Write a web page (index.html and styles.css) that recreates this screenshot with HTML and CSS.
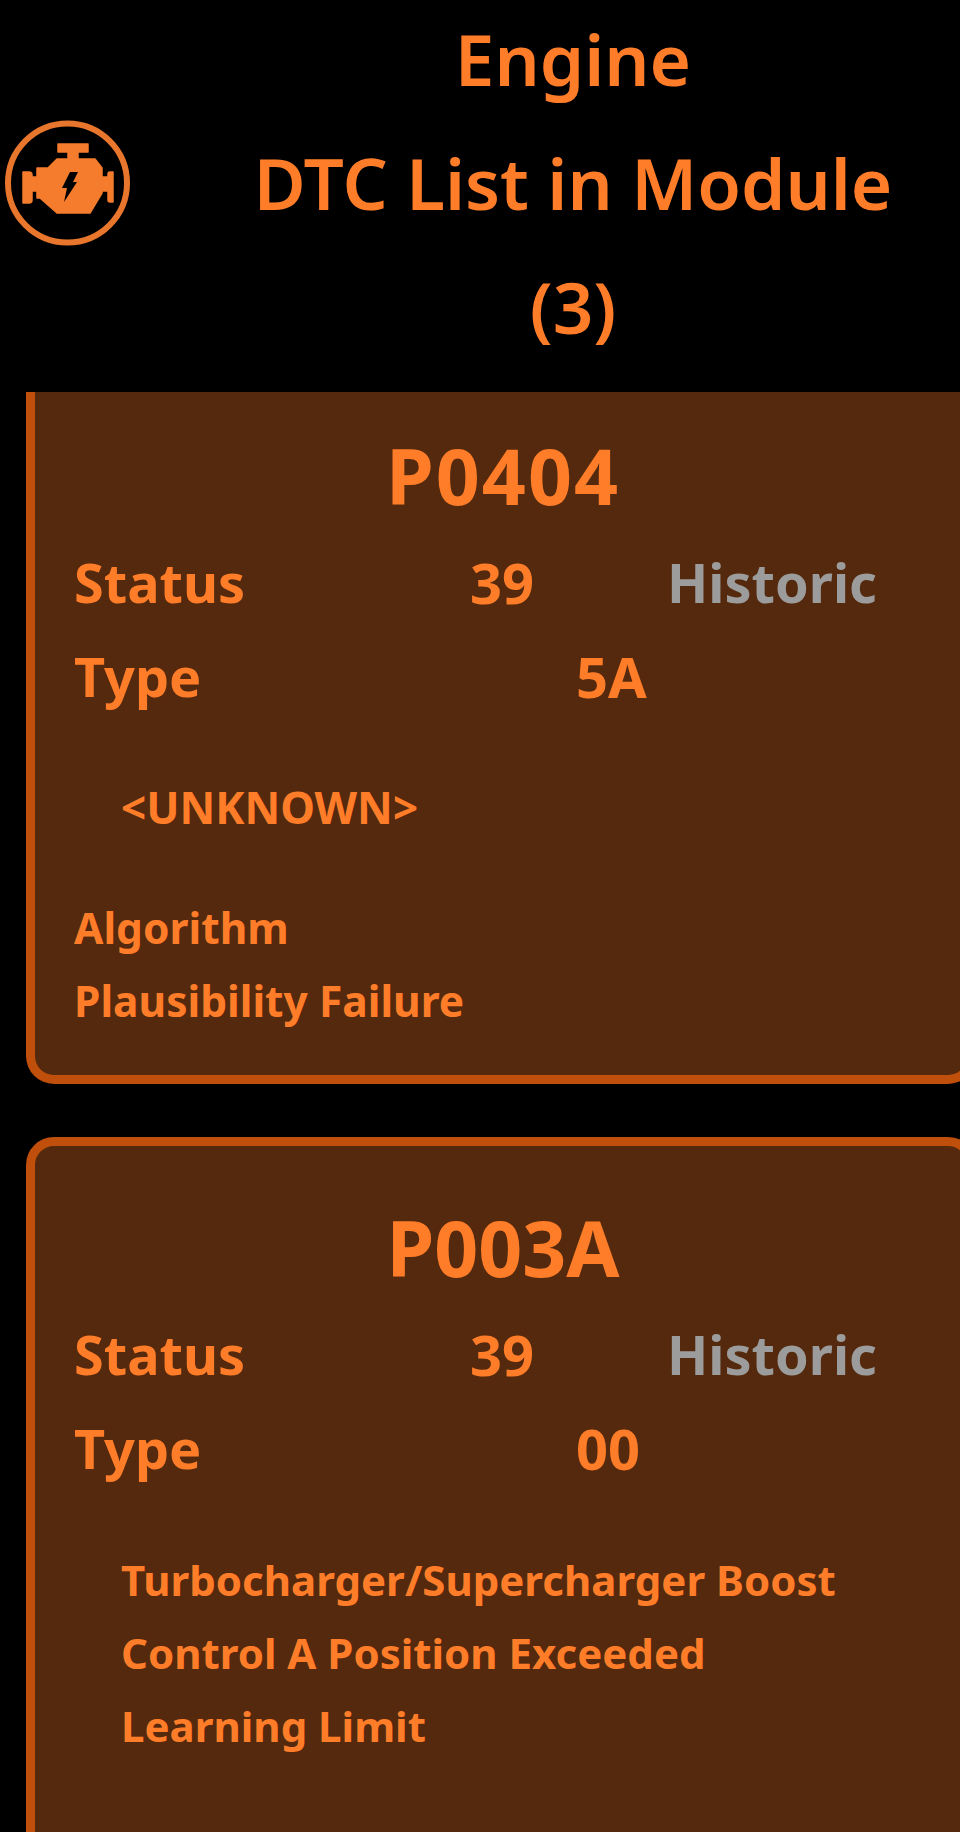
FILE: index.html
```html
<!DOCTYPE html>
<html lang="en">
<head>
<meta charset="utf-8">
<title>DTC List in Module</title>
<link rel="stylesheet" href="styles.css">
</head>
<body>
<div class="screen">
  <header class="header">
    <svg class="engine" viewBox="0 0 150 150" aria-hidden="true">
      <circle cx="67.500" cy="83" r="59.500" fill="none" stroke="#e8762c" stroke-width="6"/>
      <path fill="#f47c2c" stroke="#f47c2c" stroke-width="1.500" stroke-linejoin="round" d="M58 44H88V52H78V59H95L102 68V77H108V74Q108 72 110 72H113V102H110Q108 102 108 100V91H102V93L90 113H57L40 98H37V91H32V100Q32 103 29 103H23V72H29Q32 72 32 75V77H37V68H48L57 59H68V52H58Z"/>
      <path fill="#000" d="M70 72H78L73 82H77L64 102 67 88H62Z"/>
    </svg>
    <h1 class="title">Engine<br>DTC List in Module<br>(3)</h1>
  </header>
  <main class="list">
    <section class="card card-cut">
      <h2 class="code code-digits">P0404</h2>
      <div class="row"><span class="label">Status</span><span class="num">39</span><span class="state">Historic</span></div>
      <div class="row row-type"><span class="label">Type</span><span class="num">5A</span></div>
      <p class="desc desc-caps">&lt;UNKNOWN&gt;</p>
      <p class="note">Algorithm<br>Plausibility Failure</p>
    </section>
    <section class="card">
      <h2 class="code">P003A</h2>
      <div class="row"><span class="label">Status</span><span class="num">39</span><span class="state">Historic</span></div>
      <div class="row row-type"><span class="label">Type</span><span class="num">00</span></div>
      <p class="desc">Turbocharger/Supercharger Boost<br>Control A Position Exceeded<br>Learning Limit</p>
    </section>
  </main>
</div>
</body>
</html>
```
FILE: styles.css
```css
* { box-sizing: border-box; margin: 0; padding: 0; }
html, body { background: #000; }
body { width: 960px; height: 1832px; overflow: hidden; font-family: "Noto Sans", "Open Sans", sans-serif; font-weight: 700; color: #ff7d29; }
.screen { width: 960px; height: 1832px; overflow: hidden; }
.header { height: 392px; display: flex; align-items: center; padding-bottom: 26px; }
.engine { width: 150px; height: 150px; flex: none; align-self: flex-start; margin-top: 100px; }
.title { flex: 1; font-size: 71px; font-weight: 600; line-height: 124px; text-align: center; padding-left: 36px; }
.list { margin-left: 26px; width: 950px; display: flex; flex-direction: column; gap: 53px; }
.card { background: #54290d; border: 9px solid #bf4f0b; border-radius: 28px; padding: 43px 0 0 39px; min-height: 800px; }
.card-cut { border-top: 0; border-top-left-radius: 0; border-top-right-radius: 0; min-height: 0; height: 692px; padding-top: 25px; }
.code { font-size: 77px; font-weight: 700; line-height: 118px; text-align: center; padding-right: 35px; }
.code-digits { letter-spacing: 2px; }
.row { display: flex; align-items: center; height: 94px; font-size: 54px; }
.label { width: 396px; }
.num { width: 197px; font-size: 56px; }
.state { color: #9c9c9c; }
.row-type .num { margin-left: 106px; }
.desc { font-size: 42px; line-height: 73px; padding-left: 47px; margin-top: 48px; }
.desc-caps { font-size: 44px; }
.note { font-size: 42.500px; line-height: 73px; margin-top: 47px; }
```
